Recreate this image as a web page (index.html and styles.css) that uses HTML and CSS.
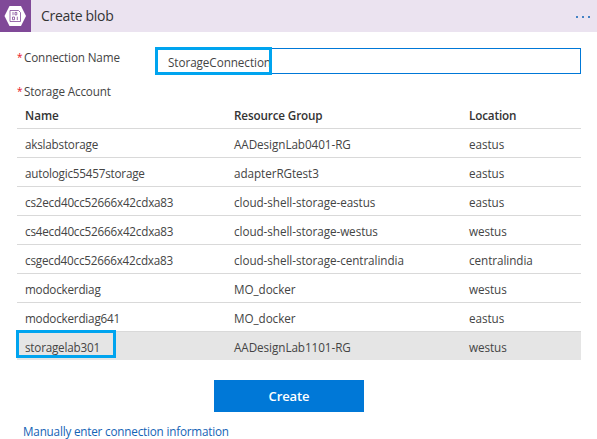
FILE: index.html
```html
<!DOCTYPE html>
<html lang="en">
<head>
<meta charset="utf-8">
<title>Create blob</title>
<link rel="stylesheet" href="styles.css">
</head>
<body>
<header class="card-header">
  <svg class="logo" viewBox="0 0 31 32" width="31" height="32" aria-hidden="true">
    <rect width="31" height="32" fill="#804998"/>
    <path d="M9.5 6h11.5l5 10-5 10H9.500L4.500 16z" fill="#fff"/>
    <path d="M10 10.500h8.500l2 2v9H10z" fill="#fff" stroke="#804998" stroke-width=".8"/>
    <path d="M13 12v3.200M15 12.400h1.800v2.500H15zM12.500 17h2v2.700h-2zM17.300 16.700v3.400" fill="none" stroke="#804998" stroke-width=".8"/>
  </svg>
  <h1 class="title">Create blob</h1>
  <div class="more"><i></i><i></i><i></i></div>
</header>
<main class="form">
  <div class="field">
    <div class="label"><span class="req">*</span><span class="label-name">Connection Name</span></div>
    <div class="input"><span class="value">StorageConnection</span><span class="mark mark-input"></span></div>
  </div>
  <div class="label label-table"><span class="req">*</span><span class="label-account">Storage Account</span></div>
  <div class="table">
    <div class="row head"><span>Name</span><span>Resource Group</span><span>Location</span></div>
    <div class="row"><span>akslabstorage</span><span>AADesignLab0401-RG</span><span>eastus</span></div>
    <div class="row"><span>autologic55457storage</span><span>adapterRGtest3</span><span>eastus</span></div>
    <div class="row"><span>cs2ecd40cc52666x42cdxa83</span><span>cloud-shell-storage-eastus</span><span>eastus</span></div>
    <div class="row"><span>cs4ecd40cc52666x42cdxa83</span><span>cloud-shell-storage-westus</span><span>westus</span></div>
    <div class="row"><span>csgecd40cc52666x42cdxa83</span><span>cloud-shell-storage-centralindia</span><span>centralindia</span></div>
    <div class="row"><span>modockerdiag</span><span>MO_docker</span><span>westus</span></div>
    <div class="row"><span>modockerdiag641</span><span>MO_docker</span><span>eastus</span></div>
    <div class="row selected"><span>storagelab301</span><span>AADesignLab1101-RG</span><span>westus</span><b class="mark mark-row"></b></div>
  </div>
  <button class="create">Create</button>
  <a class="manual">Manually enter connection information</a>
</main>
</body>
</html>
```

FILE: styles.css
```css
* { box-sizing: border-box; }
body {
  margin: 0;
  background: #fff;
  color: #444;
  font: 11.7px/16px "Open Sans", "Noto Sans", sans-serif;
}
.card-header {
  display: flex;
  align-items: center;
  height: 32px;
  padding-right: 7px;
  background: #ebe3f0;
}
.title {
  margin: 0 auto 0 10px;
  color: #333;
  font-size: 14px;
  font-weight: 400;
  letter-spacing: -.3px;
}
.more { display: flex; gap: 4px; padding-top: 2px; }
.more i { width: 2px; height: 2px; background: #4382c4; }
.form { display: flex; flex-direction: column; padding: 16px 16px 0 17px; }
.field { display: flex; height: 26px; }
.label { display: flex; width: 138px; padding-top: 1px; letter-spacing: -.14px; }
.label-table { padding-top: 9px; height: 27px; }
.req { width: 7px; color: #e81123; font-size: 10px; }
.input {
  position: relative;
  flex: 1;
  padding: 5px 12px;
  border: 1px solid #0078d7;
  letter-spacing: -.06px;
}
.mark { position: absolute; border: 3px solid #00a4ef; }
.mark-input { left: -1px; top: -2px; width: 117px; height: 28px; }
.row {
  position: relative;
  display: grid;
  grid-template-columns: 209px 235px 1fr;
  align-items: center;
  height: 29px;
  padding: 1px 0 0 8px;
  border-bottom: 1px solid #d9d9d9;
  letter-spacing: -.06px;
}
.row span:first-child { letter-spacing: -.21px; }
.head { height: 28px; padding-top: 0; color: #333; font-weight: 600; letter-spacing: -.14px; }
.head span:first-child { letter-spacing: 0; }
.selected { height: 28px; background: #e5e5e5; border-bottom: 0; }
.mark-row { left: -1px; top: -2px; width: 100px; height: 28px; }
.create {
  width: 150px;
  height: 32px;
  margin: 20px 0 11px 197px;
  padding: 0;
  border: 0;
  background: #0078d7;
  color: #fff;
  font: 600 13px/32px "Open Sans", sans-serif;
  letter-spacing: -.1px;
}
.manual { padding-left: 6px; color: #1463b5; letter-spacing: -.19px; }
```
